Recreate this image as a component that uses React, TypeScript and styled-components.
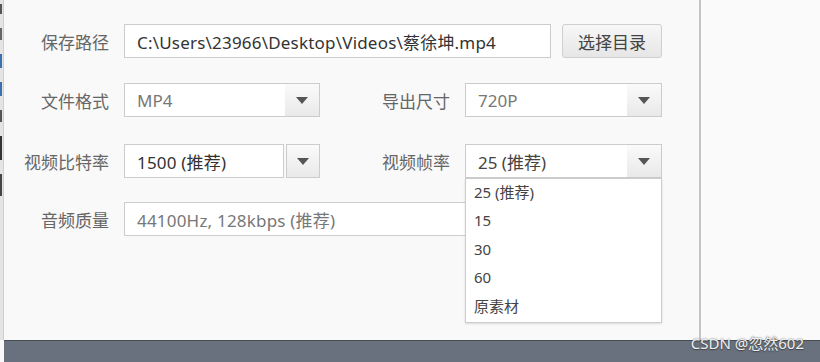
import styled, { createGlobalStyle } from "styled-components";

const GlobalStyle = createGlobalStyle`
  html, body {
    margin: 0;
    padding: 0;
    background: #f9f9f9;
  }
  body {
    font-family: "Noto Sans", "Noto Sans CJK SC", sans-serif;
  }
`;

const Screen = styled.div`
  width: 820px;
  height: 362px;
  display: flex;
  flex-direction: column;
  overflow: hidden;
  position: relative;
`;
const Main = styled.div`
  flex: 1;
  display: flex;
`;
const Behind = styled.div`
  width: 3px;
  background: #e4e4e4;
  border-right: 1px solid #cfcfcf;
  display: flex;
  flex-direction: column;
  gap: 14px;
  padding-top: 4px;
`;
const Scrap = styled.span<{ $h: number; $c: string }>`
  display: block;
  width: 2px;
  height: ${(p) => p.$h}px;
  background: ${(p) => p.$c};
`;
const Panel = styled.div`
  width: 695px;
  background: #f9f9f9;
  border-right: 2px solid #c4c4c4;
  padding-top: 24px;
  display: flex;
  flex-direction: column;
`;
const Side = styled.div`
  flex: 1;
  background: #fafafa;
`;
const Row = styled.div<{ $mt?: number }>`
  display: flex;
  align-items: center;
  height: 34px;
  margin-top: ${(p) => p.$mt ?? 0}px;
`;
const Label = styled.label<{ $w: number }>`
  width: ${(p) => p.$w}px;
  margin-right: 15px;
  text-align: right;
  font-size: 17px;
  color: #666;
  white-space: nowrap;
`;
const Field = styled.div<{ $w: number; $dim?: boolean }>`
  box-sizing: border-box;
  width: ${(p) => p.$w}px;
  height: 34px;
  background: #fff;
  border: 1px solid #cccccc;
  display: flex;
  align-items: center;
  padding-left: 12px;
  font-size: 17px;
  letter-spacing: 0.2px;
  color: ${(p) => (p.$dim ? "#777" : "#333")};
  white-space: nowrap;
  overflow: hidden;
`;
const Button = styled.button`
  box-sizing: border-box;
  width: 100px;
  height: 34px;
  margin-left: 11px;
  border: 1px solid #cfcfcf;
  border-radius: 3px;
  background: linear-gradient(#f7f7f7, #e6e6e6);
  font-family: inherit;
  font-size: 17px;
  color: #444;
  padding: 0;
`;
const SelectWrap = styled.div<{ $w: number }>`
  position: relative;
  width: ${(p) => p.$w}px;
`;
const Select = styled.div<{ $dim?: boolean }>`
  box-sizing: border-box;
  height: 34px;
  background: #fff;
  border: 1px solid #cccccc;
  display: flex;
  align-items: center;
  font-size: 17px;
  color: ${(p) => (p.$dim ? "#777" : "#444")};
`;
const Value = styled.span`
  flex: 1;
  padding-left: 12px;
  white-space: nowrap;
`;
const ArrowZone = styled.span`
  width: 34px;
  height: 100%;
  display: flex;
  align-items: center;
  justify-content: center;
  background: linear-gradient(#fafafa, #e9e9e9);
`;
const ArrowBox = styled.div`
  box-sizing: border-box;
  width: 34px;
  height: 34px;
  margin-left: 2px;
  border: 1px solid #cccccc;
  display: flex;
  align-items: center;
  justify-content: center;
  background: linear-gradient(#fafafa, #e9e9e9);
`;
const Triangle = styled.span`
  width: 0;
  height: 0;
  border-left: 6px solid transparent;
  border-right: 6px solid transparent;
  border-top: 7px solid #555;
`;
const Menu = styled.ul`
  position: absolute;
  top: 34px;
  left: 0;
  right: 0;
  margin: 0;
  padding: 0 0 1px;
  list-style: none;
  background: #fff;
  border: 1px solid #cccccc;
  box-shadow: 0 1px 2px rgba(0, 0, 0, 0.12);
  z-index: 5;
`;
const MenuItem = styled.li`
  height: 28.4px;
  line-height: 26px;
  padding-left: 8px;
  font-size: 15px;
  color: #444;
`;
const Footer = styled.div`
  height: 21px;
  background: #68717d;
  border-top: 1px solid #474c53;
  margin-left: 4px;
`;
const Watermark = styled.span`
  position: absolute;
  right: 16px;
  bottom: 9px;
  font-size: 15px;
  color: #eef0f2;
  text-shadow: 0 0 2px #555, 0 1px 1px #444;
`;

const Arrow = () => (
  <ArrowZone>
    <Triangle />
  </ArrowZone>
);

export default function App() {
  const frames = ["25 (推荐)", "15", "30", "60", "原素材"];
  return (
    <Screen>
      <GlobalStyle />
      <Main>
        <Behind>
          <Scrap $h={10} $c="#555" />
          <Scrap $h={12} $c="#666" />
          <Scrap $h={14} $c="#3a6fb0" />
          <Scrap $h={14} $c="#3a6fb0" />
          <Scrap $h={12} $c="#555" />
          <Scrap $h={24} $c="#333" />
          <Scrap $h={22} $c="#444" />
        </Behind>
        <Panel>
          <Row>
            <Label $w={105}>保存路径</Label>
            <Field $w={427}>C:\Users\23966\Desktop\Videos\蔡徐坤.mp4</Field>
            <Button>选择目录</Button>
          </Row>
          <Row $mt={25}>
            <Label $w={105}>文件格式</Label>
            <SelectWrap $w={196}>
              <Select $dim>
                <Value>MP4</Value>
                <Arrow />
              </Select>
            </SelectWrap>
            <Label $w={130}>导出尺寸</Label>
            <SelectWrap $w={197}>
              <Select $dim>
                <Value>720P</Value>
                <Arrow />
              </Select>
            </SelectWrap>
          </Row>
          <Row $mt={27}>
            <Label $w={105}>视频比特率</Label>
            <Field $w={160}>1500 (推荐)</Field>
            <ArrowBox>
              <Triangle />
            </ArrowBox>
            <Label $w={130}>视频帧率</Label>
            <SelectWrap $w={197}>
              <Select>
                <Value>25 (推荐)</Value>
                <Arrow />
              </Select>
              <Menu>
                {frames.map((f) => (
                  <MenuItem key={f}>{f}</MenuItem>
                ))}
              </Menu>
            </SelectWrap>
          </Row>
          <Row $mt={24}>
            <Label $w={105}>音频质量</Label>
            <Field $w={538} $dim>
              44100Hz, 128kbps (推荐)
            </Field>
          </Row>
        </Panel>
        <Side />
      </Main>
      <Footer />
      <Watermark>CSDN @忽然602</Watermark>
    </Screen>
  );
}
